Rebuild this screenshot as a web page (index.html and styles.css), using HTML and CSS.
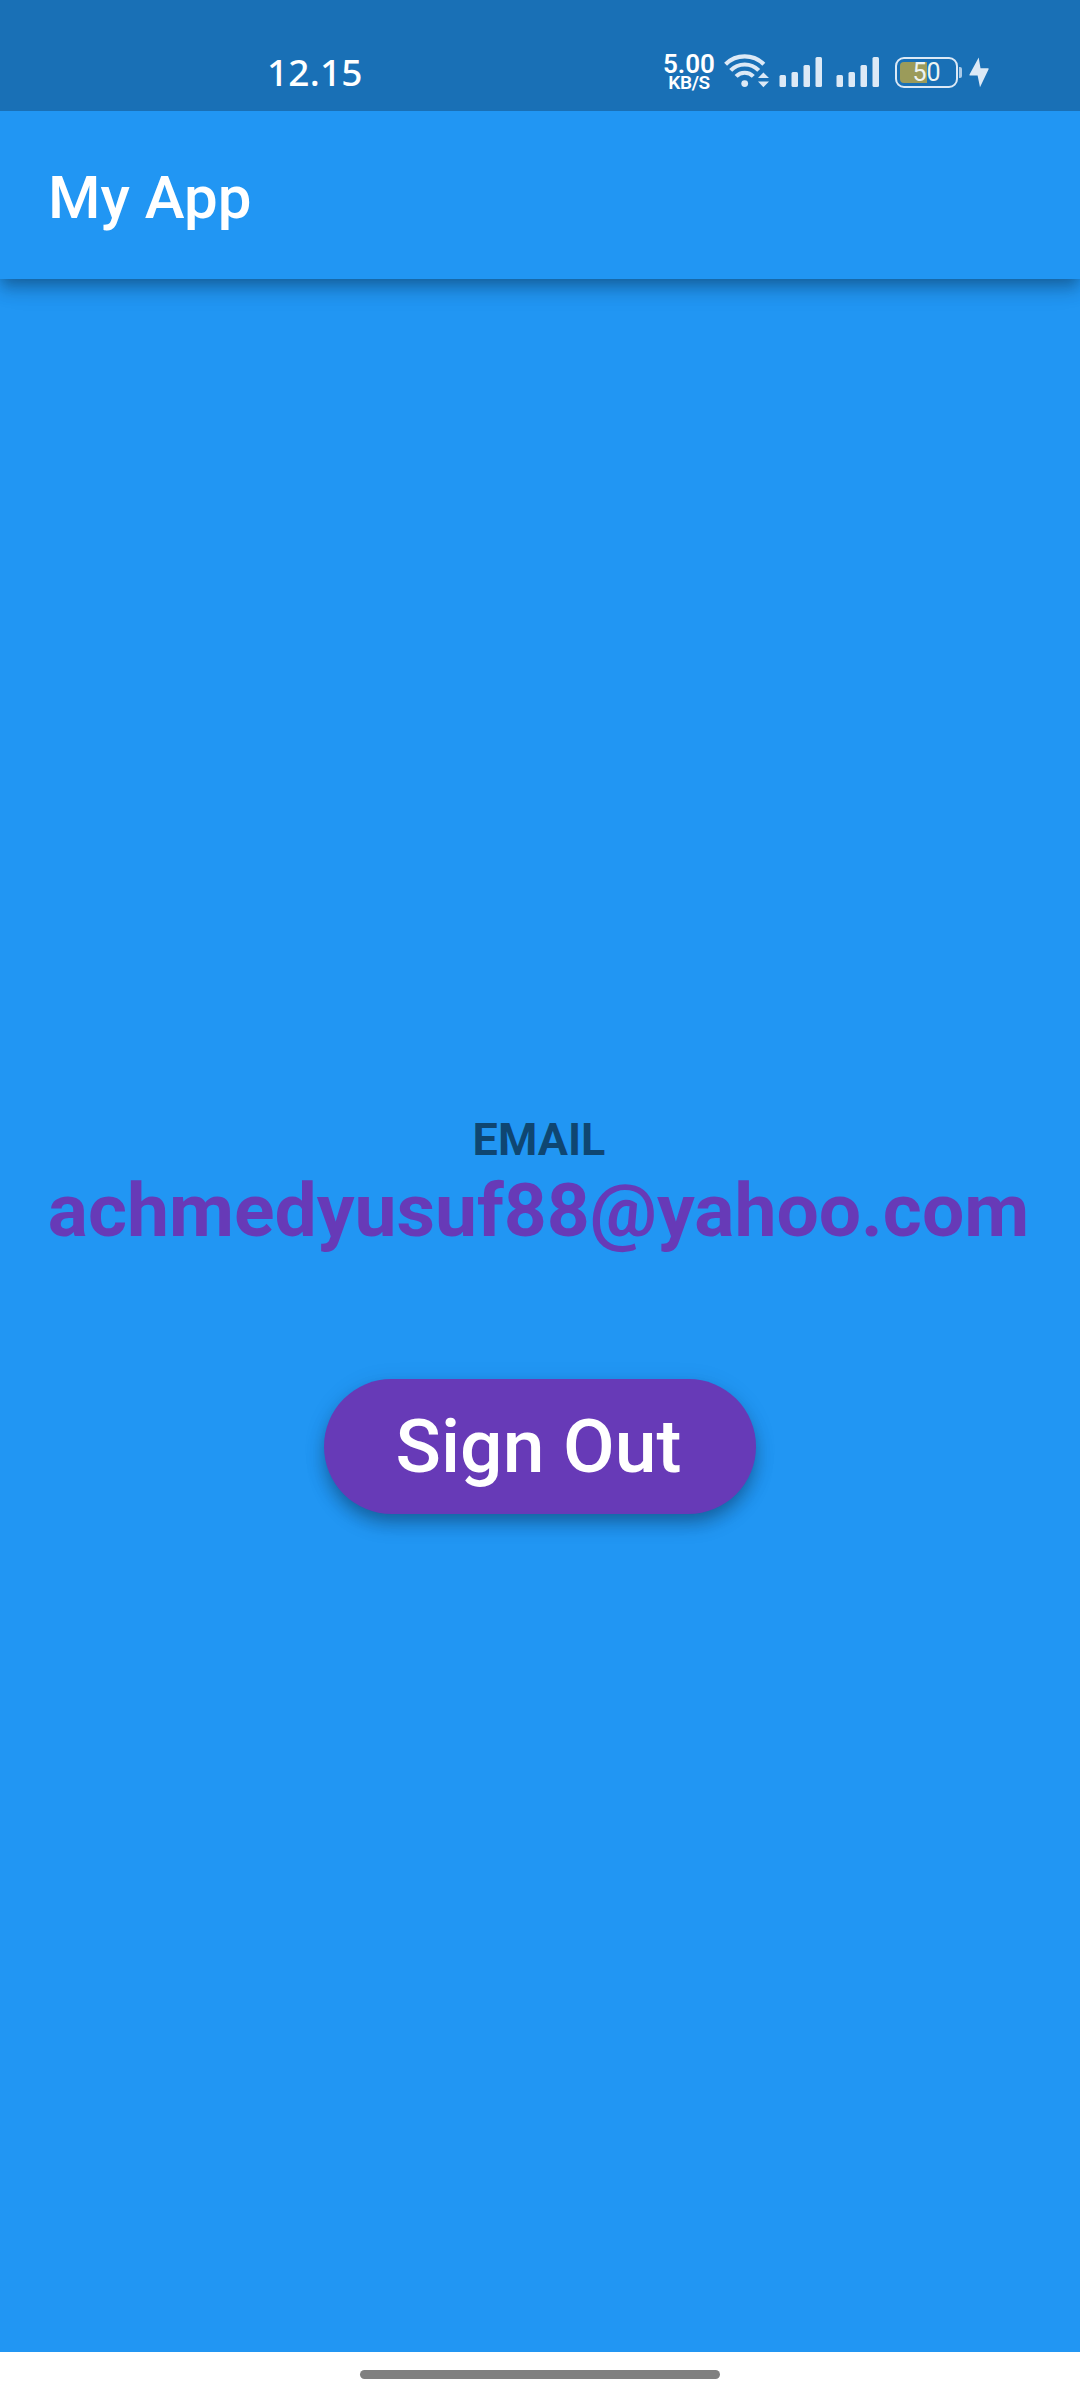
FILE: index.html
```html
<!DOCTYPE html>
<html lang="en">
<head>
<meta charset="utf-8">
<title>My App</title>
<link rel="stylesheet" href="styles.css">
</head>
<body>
<div class="status-bar">
  <span class="clock">12.15</span>
  <div class="net-speed">
    <span class="net-value">5.00</span>
    <span class="net-unit">KB/S</span>
  </div>
  <svg class="wifi" width="46" height="36" viewBox="0 0 46 36">
    <g fill="none" stroke="#dce9f6" stroke-width="4.2">
      <path d="M1.6 11.2A27.3 27.3 0 0 1 39.8 11.2"/>
      <path d="M6.7 17.4A19.6 19.6 0 0 1 34.7 17.4"/>
      <path d="M12.1 23.4A12 12 0 0 1 29.3 23.4"/>
    </g>
    <g fill="#dce9f6">
      <circle cx="20.7" cy="30.6" r="3.4"/>
      <path d="M34 25l5.4-5.6L45 25zM34 28.600h11l-5.600 5.600z"/>
    </g>
  </svg>
  <svg class="signal first" width="44" height="31" viewBox="0 0 44 31">
    <g fill="#dce9f6">
      <rect x="0.500" y="18" width="6.500" height="12" rx="1.500"/><rect x="12.500" y="15" width="6.500" height="15" rx="1.500"/>
      <rect x="24.500" y="8" width="6.500" height="22" rx="1.500"/><rect x="36.500" y="0" width="6.500" height="30" rx="1.500"/>
    </g>
  </svg>
  <svg class="signal second" width="44" height="31" viewBox="0 0 44 31">
    <g fill="#dce9f6">
      <rect x="0.500" y="18" width="6.500" height="12" rx="1.500"/><rect x="12.500" y="15" width="6.500" height="15" rx="1.500"/>
      <rect x="24.500" y="8" width="6.500" height="22" rx="1.500"/><rect x="36.500" y="0" width="6.500" height="30" rx="1.500"/>
    </g>
  </svg>
  <div class="battery"><span class="battery-level">50</span></div>
  <span class="battery-cap"></span>
  <svg class="bolt" width="20" height="31" viewBox="0 0 20 31">
    <path d="M9.700 0.500L0.500 17.500Q0 18.600 1 18.600H8.600L11 30.300L19.600 12.300Q20 11.200 19 11.200H11.500Z" fill="#dce9f6"/>
  </svg>
</div>
<header class="app-bar"><h1 class="title">My App</h1></header>
<main class="content">
  <p class="label">EMAIL</p>
  <p class="email">achmedyusuf88@yahoo.com</p>
  <button class="sign-out" type="button">Sign Out</button>
</main>
<footer class="nav-bar"><span class="handle"></span></footer>
</body>
</html>
```
FILE: styles.css
```css
* { box-sizing: border-box; margin: 0; padding: 0; }
body {
  width: 1080px;
  height: 2400px;
  display: flex;
  flex-direction: column;
  overflow: hidden;
  background: #2196f3;
  font-family: Roboto, sans-serif;
}
.status-bar {
  height: 111px;
  display: flex;
  align-items: flex-start;
  padding: 50px 0 0 267px;
  background: #1970b6;
  color: #fff;
}
.clock {
  width: 120px;
  margin-top: 2px;
  font-family: "Noto Sans", sans-serif;
  font-size: 37px;
  font-weight: 500;
  line-height: 40px;
  letter-spacing: 0.2px;
}
.net-speed {
  width: 54px;
  margin-left: 275px;
  display: flex;
  flex-direction: column;
  align-items: center;
  font-weight: 600;
  white-space: nowrap;
}
.net-value { margin-top: 1px; font-size: 26px; line-height: 26px; }
.net-unit { margin-top: -2px; font-size: 19px; line-height: 16px; letter-spacing: -0.4px; }
.wifi { margin: 3px 0 0 8px; }
.signal { margin-top: 7px; }
.first { margin-left: 9px; }
.second { margin-left: 13px; }
.battery {
  width: 63px;
  height: 31px;
  margin: 7px 0 0 15px;
  padding: 3px;
  border: 2px solid #dce9f6;
  border-radius: 9px;
}
.battery-level {
  display: block;
  height: 21px;
  border-radius: 4px;
  background: linear-gradient(90deg, #9b9b5a 27px, transparent 27px);
  color: #eef4f2;
  font-size: 25px;
  line-height: 22px;
  text-align: center;
}
.battery-cap {
  width: 3px;
  height: 11px;
  margin: 17px 0 0 1px;
  border-radius: 0 2px 2px 0;
  background: #a9cae8;
}
.bolt { margin: 7px 0 0 7px; }
.app-bar {
  height: 168px;
  display: flex;
  align-items: center;
  padding-left: 48px;
  background: #2196f3;
  box-shadow: 0 6px 12px -3px rgba(0, 0, 0, 0.2), 0 12px 15px rgba(0, 0, 0, 0.14), 0 3px 30px rgba(0, 0, 0, 0.12);
  clip-path: inset(0 0 -50px 0);
}
.title { padding-top: 5px; color: #fff; font-size: 60px; font-weight: 500; line-height: 70px; }
.content {
  flex: 1;
  display: flex;
  flex-direction: column;
  align-items: center;
  justify-content: center;
  padding-bottom: 4.5px;
}
.label { padding-right: 2px; color: rgba(0, 0, 0, 0.54); font-size: 45px; font-weight: 700; line-height: 53px; }
.email { padding-right: 3px; color: #673ab7; font-size: 75px; font-weight: 700; line-height: 88px; }
.sign-out {
  width: 432px;
  height: 135px;
  margin-top: 124.5px;
  padding-right: 3px;
  border: 0;
  border-radius: 68px;
  background: #673ab7;
  color: #fff;
  font: 500 75px/88px Roboto, sans-serif;
  box-shadow: 0 9px 15px -3px rgba(0, 0, 0, 0.2), 0 12px 20px rgba(0, 0, 0, 0.14), 0 3px 24px rgba(0, 0, 0, 0.08);
}
.nav-bar { height: 48px; display: flex; justify-content: center; padding-top: 18px; background: #fff; }
.handle { width: 360px; height: 9px; border-radius: 5px; background: #808080; }
```
